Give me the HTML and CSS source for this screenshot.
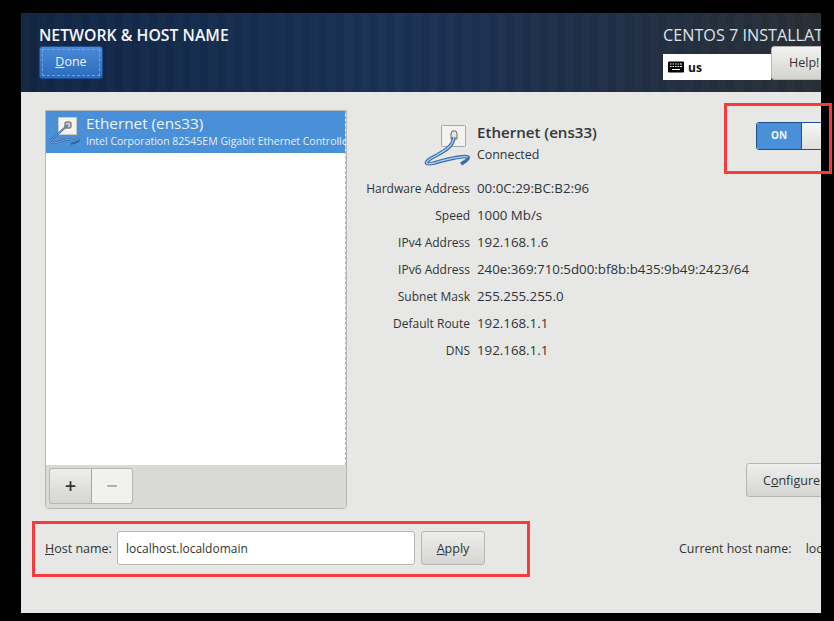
FILE: index.html
```html
<!DOCTYPE html>
<html lang="en">

<head>
    <meta charset="UTF-8">
    <meta name="viewport" content="width=device-width, initial-scale=1.0">
    <title>Network &amp; Host Name</title>
    <link rel="stylesheet" href="styles.css">
</head>

<body>
    <div class="window">
        <div class="screen">
            <header class="topbar">
                <div class="topbar-left">
                    <h1>NETWORK &amp; HOST NAME</h1>
                    <button class="done-button"><span class="done-inner"><u>D</u>one</span></button>
                </div>
                <div class="topbar-right">
                    <div class="product">CENTOS 7 INSTALLATION</div>
                    <div class="topbar-tools">
                        <div class="layout-box">
                            <svg class="kbd-icon" width="16" height="12" viewBox="0 0 16 12">
                                <rect width="16" height="11" y="0.5" rx="1" fill="#000" />
                                <path d="M2 3h1.5M4.5 3H6M7 3h1.5M9.5 3H11M12 3h2M2 5.5h1.5M4.5 5.5H6M7 5.5h1.5M9.5 5.5H11M12 5.5h2M4 8.5h8" stroke="#fff" stroke-width="1.2" />
                            </svg>
                            <span>us</span>
                        </div>
                        <button class="help-button">Help!</button>
                    </div>
                </div>
            </header>

            <main class="content">
                <div class="panels">
                    <section class="device-panel">
                        <div class="device-list">
                            <div class="device-row">
                                <svg class="cable-small" width="32" height="30" viewBox="0 0 32 30">
                                    <rect x="10.5" y="1.5" width="18" height="17" fill="#f4f3f0" stroke="#c9c9c6" />
                                    <rect x="17" y="6" width="6" height="6" rx="1" fill="#cfcfcc" stroke="#555" />
                                    <path d="M20 9 L3 24 C1 28 8 27 14 25 C20 23 29 22 31 24 C31 26 26 27 23 28" fill="none" stroke="#2f5f9e" stroke-width="2" />
                                    <path d="M20 9 L3 24 C1 28 8 27 14 25 C20 23 29 22 31 24" fill="none" stroke="#a9c6ea" stroke-width="0.7" />
                                </svg>
                                <div class="device-text">
                                    <div class="device-name">Ethernet (ens33)</div>
                                    <div class="device-desc">Intel Corporation 82545EM Gigabit Ethernet Controller (Copper)</div>
                                </div>
                            </div>
                        </div>
                        <div class="device-toolbar">
                            <button class="tool-button tool-add">+</button>
                            <button class="tool-button tool-remove">−</button>
                        </div>
                    </section>

                    <section class="detail-panel">
                        <div class="detail-top">
                            <div class="detail-head">
                                <svg class="cable-large" width="50" height="50" viewBox="0 0 50 50">
                                    <rect x="21.5" y="1.5" width="24" height="21" rx="1" fill="#f3f2ef" stroke="#a8a8a5" />
                                    <path d="M31 15v-6l1-1v-1h4v1l1 1v6z" fill="#e8e8e6" stroke="#666" />
                                    <path d="M34 13 C33 24 22 28 10 35 C4 39 6 41 14 39 C24 36 44 31 48 33 C49 36 44 38 41 40" fill="none" stroke="#3a6db0" stroke-width="3.6" />
                                    <path d="M34 13 C33 24 22 28 10 35 C4 39 6 41 14 39 C24 36 44 31 48 33" fill="none" stroke="#b5d0f0" stroke-width="1.3" />
                                </svg>
                                <div class="detail-title">
                                    <div class="detail-name">Ethernet (ens33)</div>
                                    <div class="detail-state">Connected</div>
                                </div>
                            </div>
                            <div class="switch">
                                <div class="switch-on">ON</div>
                                <div class="switch-knob"></div>
                            </div>
                        </div>

                        <dl class="detail-rows">
                            <dt>Hardware Address</dt><dd>00:0C:29:BC:B2:96</dd>
                            <dt>Speed</dt><dd>1000 Mb/s</dd>
                            <dt>IPv4 Address</dt><dd>192.168.1.6</dd>
                            <dt>IPv6 Address</dt><dd>240e:369:710:5d00:bf8b:b435:9b49:2423/64</dd>
                            <dt>Subnet Mask</dt><dd>255.255.255.0</dd>
                            <dt>Default Route</dt><dd>192.168.1.1</dd>
                            <dt>DNS</dt><dd>192.168.1.1</dd>
                        </dl>

                        <div class="detail-actions">
                            <button class="plain-button configure-button">C<u>o</u>nfigure...</button>
                        </div>
                    </section>
                </div>

                <div class="host-row">
                    <div class="host-form">
                        <label class="host-label" for="hostName"><u>H</u>ost name:</label>
                        <input class="host-input" id="hostName" type="text" value="localhost.localdomain">
                        <button class="plain-button apply-button"><u>A</u>pply</button>
                    </div>
                    <div class="host-current">
                        <span>Current host name:</span>
                        <span class="host-value">localhost.localdomain</span>
                    </div>
                </div>
            </main>
        </div>
    </div>

    <div class="mark mark-switch"></div>
    <div class="mark mark-host"></div>
</body>

</html>
```

FILE: styles.css
```css
html,
body {
    margin: 0;
    padding: 0;
    height: 100%;
    background-color: #000;
    overflow: hidden;
}

body {
    font-family: "Open Sans", "Noto Sans", sans-serif;
    font-size: 12px;
    color: #2e3436;
}

button {
    font-family: inherit;
}

.window {
    width: 800px;
    height: 600px;
    margin: 13px 0 0 21px;
    overflow: hidden;
    background-color: #e7e7e5;
}

.screen {
    width: 830px;
    height: 600px;
}

.topbar {
    height: 79px;
    box-sizing: border-box;
    padding: 13px 0 0 18px;
    display: flex;
    justify-content: space-between;
    color: #fff;
    background: repeating-linear-gradient(90deg, rgba(255, 255, 255, 0.012) 0 9px, rgba(0, 0, 0, 0.03) 9px 17px),
        linear-gradient(90deg, #122645 0%, #1a3256 45%, #222f45 75%, #2c2f33 100%);
}

.topbar h1 {
    margin: 0 0 1px;
    font-size: 15.8px;
    line-height: 19px;
    font-weight: 600;
    color: #f4f6f9;
    white-space: nowrap;
}

.done-button {
    display: block;
    width: 64px;
    height: 33px;
    padding: 2px;
    border: 1px solid #1c4f8f;
    border-radius: 3px;
    background: linear-gradient(#4a8ad6, #2a6cbb);
    color: #e9f1fa;
    font-size: 12.5px;
}

.done-inner {
    display: block;
    height: 100%;
    line-height: 24px;
    box-sizing: border-box;
    border: 1px dashed #6fa2dc;
}

.topbar-right {
    width: 188px;
}

.product {
    font-size: 16.2px;
    line-height: 20px;
    white-space: nowrap;
    color: #dfe2e6;
    margin: -1px 0 1px;
}

.topbar-tools {
    display: flex;
    align-items: flex-end;
}

.layout-box {
    width: 108px;
    height: 26px;
    box-sizing: border-box;
    padding-left: 5px;
    display: flex;
    align-items: center;
    gap: 4px;
    background-color: #fff;
    color: #111;
    font-size: 12px;
    font-weight: 700;
}

.help-button {
    width: 80px;
    height: 34px;
    flex: none;
    padding: 0 0 2px 17px;
    text-align: left;
    border: 1px solid #b5b5b2;
    border-radius: 3px 0 0 3px;
    background: linear-gradient(#f2f2f0, #d3d3d0);
    color: #2e3436;
    font-size: 12.5px;
}

.content {
    padding: 18px 0 0 24px;
}

.panels {
    display: flex;
    height: 399px;
}

.device-panel {
    width: 302px;
    height: 399px;
    flex: none;
    box-sizing: border-box;
    border: 1px solid #b6b6b3;
    border-radius: 0 0 4px 4px;
    display: flex;
    flex-direction: column;
    overflow: hidden;
}

.device-list {
    flex: 1;
    background-color: #fff;
    border-right: 1px dashed #b6b6b3;
}

.device-row {
    height: 42px;
    display: flex;
    overflow: hidden;
    background-color: #4a90d9;
    color: #fff;
}

.cable-small {
    flex: none;
    margin: 5px 6px 0 2px;
}

.device-text {
    white-space: nowrap;
    padding-top: 2px;
}

.device-name {
    font-size: 15.3px;
    line-height: 21px;
    color: #eef4fb;
}

.device-desc {
    font-size: 10.5px;
    line-height: 14px;
    color: #e4eefa;
}

.device-toolbar {
    height: 43px;
    flex: none;
    box-sizing: border-box;
    padding: 3px;
    background-color: #d9d9d7;
    display: flex;
    align-items: flex-start;
}

.tool-button {
    height: 36px;
    padding: 0;
    border: 1px solid #b6b6b3;
    font-size: 20px;
    line-height: 1;
    font-weight: 600;
}

.tool-add {
    width: 43px;
    border-radius: 3px 0 0 3px;
    border-right: 1px solid #a5a5a2;
    background: linear-gradient(#eeeeec, #d5d5d2);
    color: #2e3436;
}

.tool-remove {
    width: 41px;
    border-left: 0;
    border-radius: 0 3px 3px 0;
    background-color: #f1f1ef;
    color: #a9a9a7;
}

.detail-panel {
    flex: 1;
    min-width: 0;
    padding-left: 18px;
    display: flex;
    flex-direction: column;
}

.detail-top {
    height: 41px;
    padding-top: 12px;
    padding-right: 5px;
    display: flex;
    justify-content: space-between;
    align-items: flex-start;
}

.detail-head {
    display: flex;
    gap: 7px;
    padding-left: 55px;
}

.cable-large {
    margin-top: 2px;
}

.detail-name {
    font-size: 15.1px;
    line-height: 20px;
    font-weight: 600;
    color: #33383a;
}

.detail-state {
    margin-top: 4px;
    font-size: 12.4px;
    line-height: 18px;
}

.switch {
    width: 90px;
    height: 28px;
    box-sizing: border-box;
    border: 1px solid #1c4f8f;
    border-radius: 3px;
    display: flex;
    overflow: hidden;
}

.switch-on {
    width: 44px;
    background-color: #4a90d9;
    color: #f2f7fc;
    font-size: 10px;
    font-weight: 700;
    line-height: 25px;
    text-align: center;
}

.switch-knob {
    flex: 1;
    border-left: 1px solid #1c4f8f;
    background: linear-gradient(#f6f6f4, #dededb);
}

.detail-rows {
    margin: 0;
    margin-top: 12px;
    display: grid;
    grid-template-columns: 105px 1fr;
    grid-auto-rows: 27px;
    column-gap: 7px;
    align-items: center;
    line-height: 18px;
}

.detail-rows dt {
    text-align: right;
    white-space: nowrap;
}

.detail-rows dd {
    margin: -1px 0 0;
    white-space: nowrap;
    font-size: 13.3px;
}

.detail-actions {
    margin-top: auto;
    padding-bottom: 12px;
    display: flex;
    justify-content: flex-end;
}

.plain-button {
    height: 34px;
    padding: 0;
    border: 1px solid #b6b6b3;
    border-radius: 3px;
    background: linear-gradient(#eeeeec, #d5d5d2);
    color: #2e3436;
    font-size: 12.5px;
}

.configure-button {
    width: 105px;
    padding-left: 16px;
    text-align: left;
    white-space: nowrap;
}

.host-row {
    margin-top: 22px;
    display: flex;
    align-items: center;
    justify-content: space-between;
}

.host-form {
    display: flex;
    align-items: center;
}

.host-label {
    width: 72px;
    flex: none;
    font-size: 12.5px;
}

.host-input {
    width: 298px;
    height: 34px;
    box-sizing: border-box;
    padding: 0 8px;
    border: 1px solid #b6b6b3;
    border-radius: 3px;
    background-color: #fff;
    color: #2e3436;
    font-family: inherit;
    font-size: 12px;
}

.apply-button {
    width: 64px;
    margin-left: 6px;
}

.host-current {
    width: 172px;
    flex: none;
    white-space: nowrap;
    overflow: hidden;
    font-size: 12.4px;
}

.host-value {
    margin-left: 11px;
}

.mark {
    position: absolute;
    box-sizing: border-box;
    border: 3px solid #f93a3a;
}

.mark-switch {
    left: 724px;
    top: 103px;
    width: 108px;
    height: 71px;
}

.mark-host {
    left: 32px;
    top: 521px;
    width: 498px;
    height: 56px;
}
```
